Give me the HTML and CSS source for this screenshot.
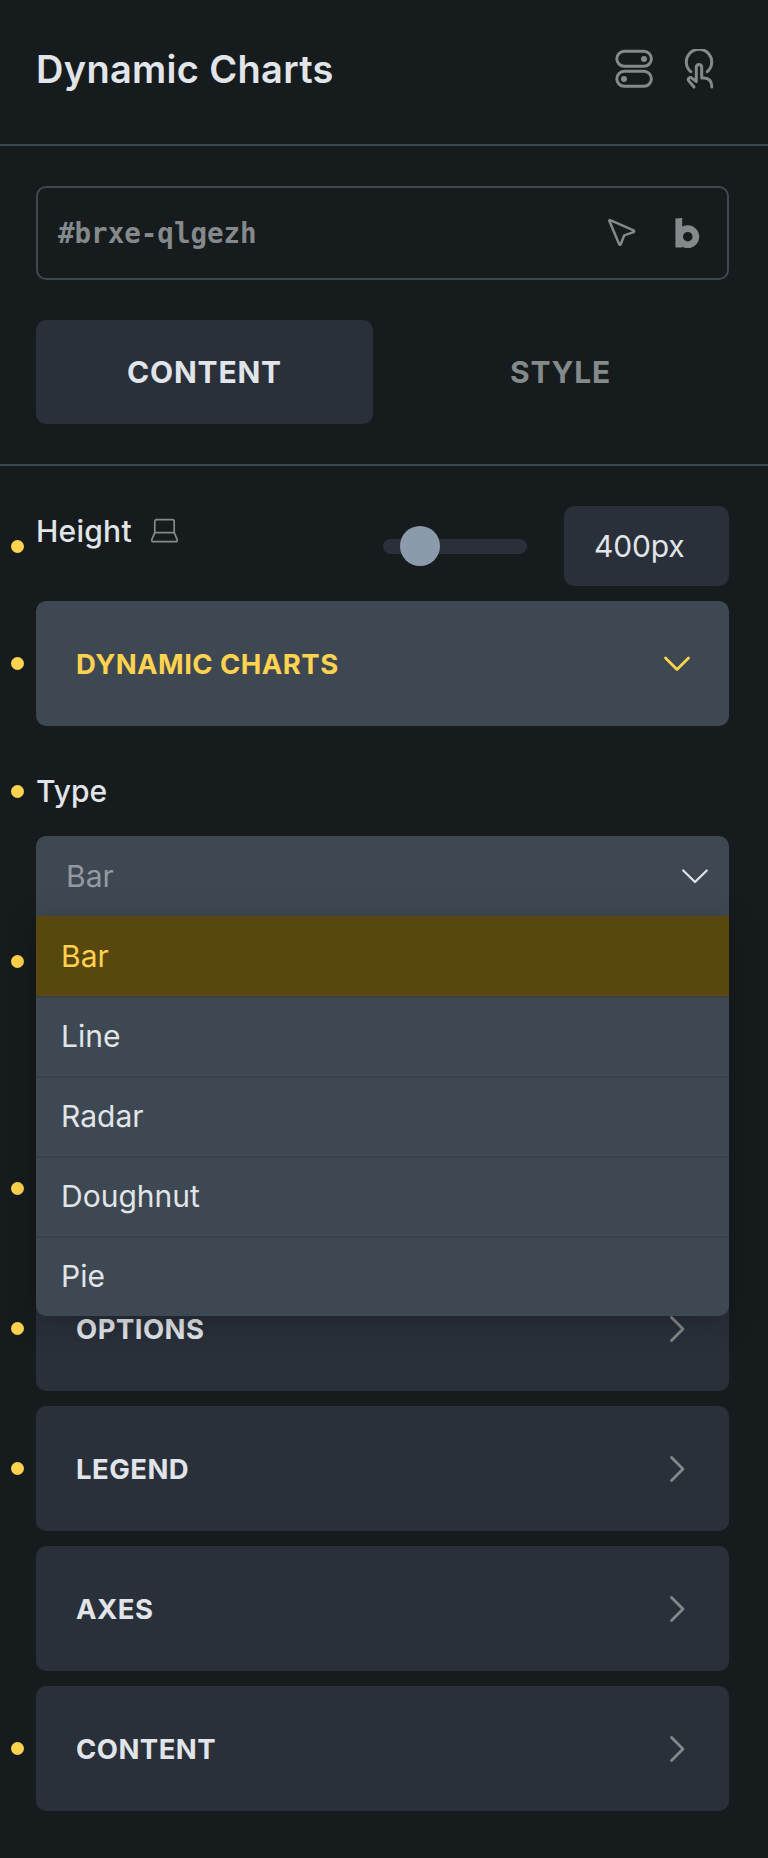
FILE: index.html
```html
<!DOCTYPE html>
<html lang="en">

<head>
    <meta charset="UTF-8">
    <meta name="viewport" content="width=device-width, initial-scale=1.0">
    <title>Dynamic Charts</title>
    <link rel="stylesheet" href="styles.css">
</head>

<body>
    <header class="panel-header">
        <h1>Dynamic Charts</h1>
        <div class="header-icons">
            <svg width="38" height="40" viewBox="0 0 38 40">
                <rect x="1.8" y="2.3" width="34.6" height="15" rx="7.5" />
                <rect x="1.8" y="22.3" width="34.6" height="15" rx="7.5" />
                <circle class="fill" cx="29" cy="10" r="3" />
                <circle class="fill" cx="9" cy="30" r="3" />
            </svg>
            <svg width="32" height="40" viewBox="0 0 32 40">
                <path d="M6.8 22.7A12.7 12.7 0 1 1 23.2 22.7" />
                <path d="M10 38L4.9 32C3 29.3 6 27.6 8.2 29.4L12.3 32.6V18.5C12.3 14.5 17.7 14.5 17.7 18.5V29H20C24.8 29 27.8 32 27.8 38" />
            </svg>
        </div>
    </header>

    <section class="panel-top">
        <div class="id-field">
            <span class="id-text">#brxe-qlgezh</span>
            <div class="id-icons">
                <svg class="cursor" width="30" height="30" viewBox="0 0 30 30">
                    <path d="M3.2 2.2Q2 1.6 2.4 3L12.2 26.2Q13 27.8 13.8 26.2L17.2 17.4L26.6 14.1Q28 13.4 26.6 12.4Z" />
                </svg>
                <svg class="logo" width="25" height="32" viewBox="0 0 25 32">
                    <path class="fill" d="M0.4 1.6L7.2 1V30.6H0.4Z" />
                    <circle cx="12.8" cy="19.7" r="8.1" />
                </svg>
            </div>
        </div>

        <div class="tabs">
            <button class="tab active">CONTENT</button>
            <button class="tab">STYLE</button>
        </div>
    </section>

    <main class="controls">
        <div class="control height-control has-value">
            <label>Height
                <svg width="28" height="26" viewBox="0 0 28 26">
                    <path d="M4.8 14.6V3.6Q4.8 1.6 6.8 1.6H22.2Q24.2 1.6 24.2 3.6V14.6ZM4.8 14.6L1.9 21.4Q1.3 23.7 3.6 23.7H25.4Q27.7 23.7 27.1 21.4L24.2 14.6" />
                </svg>
            </label>
            <div class="slider">
                <div class="slider-knob"></div>
            </div>
            <div class="number">400px</div>
        </div>

        <div class="control group open has-value">
            <span>DYNAMIC CHARTS</span>
            <svg width="28" height="28" viewBox="0 0 28 28"><path d="M2.5 8L14 19.5L25.5 8" /></svg>
        </div>

        <div class="control type-label has-value">Type</div>

        <div class="select">
            <span>Bar</span>
            <svg width="28" height="28" viewBox="0 0 28 28"><path d="M2.2 8.5L14 20L25.8 8.5" /></svg>
            <ul class="menu">
                <li class="selected">Bar</li>
                <li>Line</li>
                <li>Radar</li>
                <li>Doughnut</li>
                <li>Pie</li>
            </ul>
        </div>

        <!-- controls under the open menu -->
        <div class="control row has-value"></div>
        <div class="control row tall"></div>
        <div class="control group has-value"></div>

        <div class="control group has-value">
            <span>OPTIONS</span>
            <svg width="28" height="28" viewBox="0 0 28 28"><path d="M8.5 2.5L20 14L8.5 25.5" /></svg>
        </div>
        <div class="control group has-value">
            <span>LEGEND</span>
            <svg width="28" height="28" viewBox="0 0 28 28"><path d="M8.5 2.5L20 14L8.5 25.5" /></svg>
        </div>
        <div class="control group">
            <span>AXES</span>
            <svg width="28" height="28" viewBox="0 0 28 28"><path d="M8.5 2.5L20 14L8.5 25.5" /></svg>
        </div>
        <div class="control group has-value">
            <span>CONTENT</span>
            <svg width="28" height="28" viewBox="0 0 28 28"><path d="M8.5 2.5L20 14L8.5 25.5" /></svg>
        </div>
    </main>
</body>

</html>
```
FILE: styles.css
```css
* {
    box-sizing: border-box;
    margin: 0;
    padding: 0;
}

body {
    background-color: #161b1d;
    color: #e1e5e9;
    font-family: Inter, "Liberation Sans", sans-serif;
    font-size: 30px;
    height: 1858px;
}

svg {
    display: block;
    fill: none;
    stroke: #84898c;
    stroke-width: 2.8;
    stroke-linecap: round;
    stroke-linejoin: round;
}

svg .fill {
    fill: #84898c;
    stroke: none;
}

.panel-header {
    display: flex;
    justify-content: space-between;
    align-items: center;
    height: 146px;
    padding: 0 52px 6px 36px;
    border-bottom: 2px solid #3e4853;
}

.panel-header h1 {
    font-size: 38px;
    font-weight: 600;
    letter-spacing: 0.3px;
}

.header-icons {
    display: flex;
    gap: 31px;
}

.header-icons svg {
    stroke-width: 3;
}

.panel-top {
    height: 320px;
    padding: 40px 39px 0 36px;
    border-bottom: 2px solid #3e4853;
}

.id-field {
    display: flex;
    justify-content: space-between;
    align-items: center;
    height: 94px;
    padding: 0 27px 0 20px;
    border: 2px solid #3e4853;
    border-radius: 10px;
}

.id-text {
    font-family: "DejaVu Sans Mono", monospace;
    font-size: 27.5px;
    font-weight: bold;
    color: #84898c;
}

.id-icons {
    display: flex;
    align-items: center;
    gap: 38px;
}

.cursor {
    stroke-width: 2.5;
}

.logo circle {
    stroke-width: 6.6;
}

.tabs {
    display: flex;
    gap: 19px;
    margin-top: 40px;
}

.tab {
    flex: 1;
    height: 104px;
    border: none;
    border-radius: 10px;
    background-color: transparent;
    color: #84898c;
    font-family: inherit;
    font-size: 30px;
    font-weight: 700;
    letter-spacing: 0.8px;
}

.tab.active {
    background-color: #29303a;
    color: #e1e5e9;
}

.controls {
    display: flex;
    flex-direction: column;
    gap: 15px;
    padding: 40px 39px 0 36px;
}

.control {
    position: relative;
}

/* yellow marker for controls with a value */
.has-value::before {
    content: "";
    position: absolute;
    left: -25px;
    top: 50%;
    width: 13px;
    height: 13px;
    margin-top: -6.5px;
    border-radius: 50%;
    background-color: #ffd34e;
}

.height-control {
    display: flex;
    align-items: center;
    height: 80px;
}

.height-control label {
    display: flex;
    align-items: center;
    gap: 18px;
    width: 347px;
    height: 50px;
    align-self: flex-start;
    font-weight: 500;
    letter-spacing: 0.25px;
}

.height-control label svg {
    stroke-width: 1.7;
}

.slider {
    width: 144px;
    height: 15px;
    border-radius: 8px;
    background-color: #29303a;
}

.slider-knob {
    width: 40px;
    height: 40px;
    margin: -13px 0 0 17px;
    border-radius: 50%;
    background-color: #8b9bab;
}

.number {
    width: 165px;
    height: 80px;
    margin-left: 37px;
    padding-left: 30px;
    border-radius: 10px;
    background-color: #29303a;
    line-height: 80px;
    letter-spacing: -0.2px;
}

.group {
    display: flex;
    justify-content: space-between;
    align-items: center;
    height: 125px;
    padding: 0 38.5px 0 40px;
    border-radius: 10px;
    background-color: #29303a;
    font-size: 27.5px;
    font-weight: 700;
    letter-spacing: 0.45px;
}

.group.open {
    background-color: #3e4853;
    color: #ffd34e;
}

.group.open svg {
    stroke: #ffd34e;
}

.type-label {
    height: 80px;
    margin: 10px 0 -10px;
    line-height: 80px;
    font-weight: 500;
}

.select {
    position: relative;
    display: flex;
    justify-content: space-between;
    align-items: center;
    height: 80px;
    padding: 0 20.5px 0 30px;
    border-radius: 10px 10px 0 0;
    background-color: #3e4853;
    color: #949a9f;
}

.select svg {
    stroke: #e1e5e9;
    stroke-width: 2.2;
}

.menu {
    position: absolute;
    top: 80px;
    left: 0;
    right: 0;
    z-index: 1;
    list-style: none;
    border-radius: 0 0 10px 10px;
    background-color: #3e4853;
    box-shadow: 0 6px 30px rgba(0, 0, 0, 0.25);
    color: #e1e5e9;
}

.menu li {
    height: 80px;
    padding-left: 25px;
    border-top: 2px solid #38414b;
    line-height: 76px;
}

.menu .selected {
    border-top-color: #594710;
    background-color: #594710;
    color: #ffd34e;
}

.row {
    height: 60px;
}

.row.tall {
    height: 105px;
}
```
